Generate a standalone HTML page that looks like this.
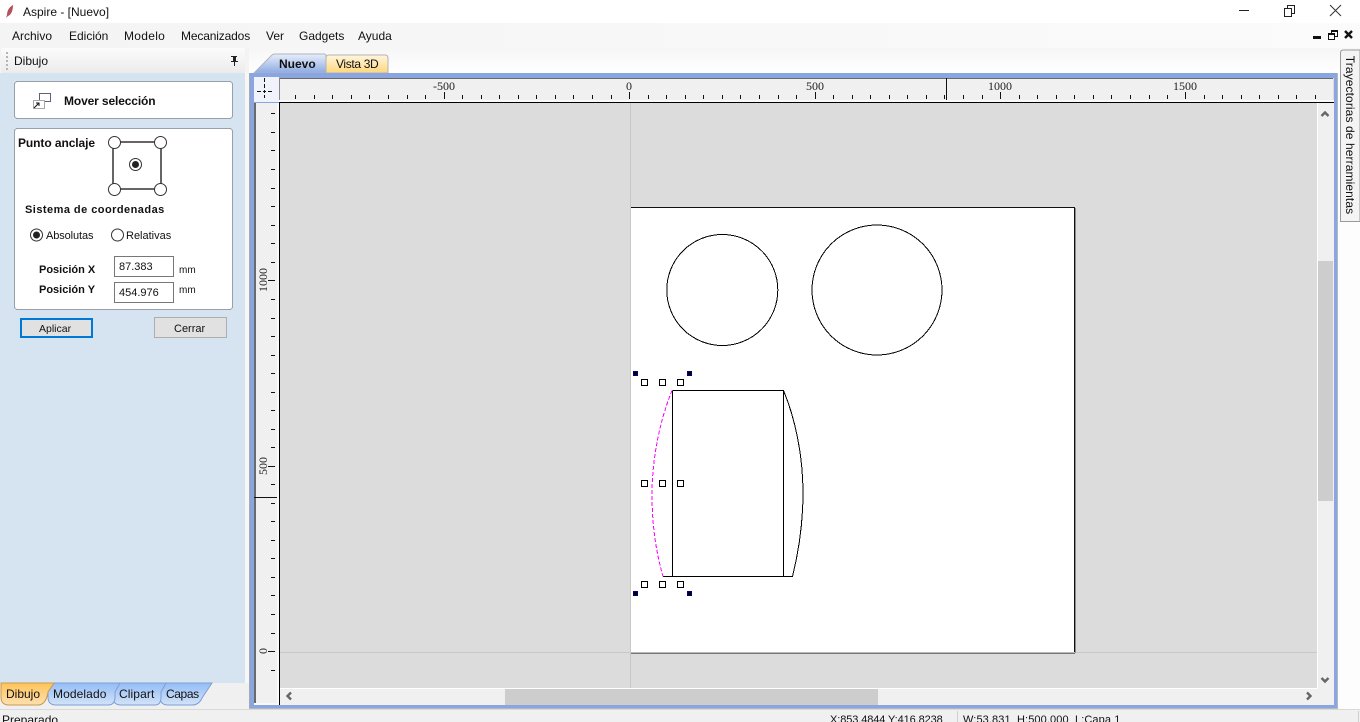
<!DOCTYPE html>
<html lang="es">
<head>
<meta charset="utf-8">
<title>Aspire - [Nuevo]</title>
<style>
html,body{margin:0;padding:0;width:1360px;height:722px;overflow:hidden;background:#fff}
body{position:relative;font:12px "Liberation Sans",sans-serif;color:#111}
.t{position:absolute;white-space:nowrap;line-height:14px}
.b{font-weight:bold}
.s{font-size:11px}
.r{font-family:"Liberation Serif",serif;font-size:12px;color:#222}
svg{position:absolute;left:0;top:0}
</style>
</head>
<body>
<svg width="1360" height="722" viewBox="0 0 1360 722" shape-rendering="crispEdges">
<defs>
<linearGradient id="hdr" x1="0" y1="0" x2="0" y2="1"><stop offset="0" stop-color="#fbfbfb"/><stop offset="1" stop-color="#ececec"/></linearGradient>
<linearGradient id="menu" x1="0" y1="0" x2="1" y2="0"><stop offset="0" stop-color="#f4f4f4"/><stop offset="1" stop-color="#fbfbfb"/></linearGradient>
<linearGradient id="top" x1="0" y1="0" x2="0" y2="1"><stop offset="0" stop-color="#f6f6f6"/><stop offset="1" stop-color="#ffffff"/></linearGradient>
<linearGradient id="blue" x1="0" y1="0" x2="0" y2="1"><stop offset="0" stop-color="#e8eefa"/><stop offset="1" stop-color="#8eaae2"/></linearGradient>
<linearGradient id="yel" x1="0" y1="0" x2="0" y2="1"><stop offset="0" stop-color="#fff6df"/><stop offset="1" stop-color="#ffd67c"/></linearGradient>
<linearGradient id="org" x1="0" y1="0" x2="0" y2="1"><stop offset="0" stop-color="#ffc458"/><stop offset="1" stop-color="#fde0b0"/></linearGradient>
<linearGradient id="blu2" x1="0" y1="0" x2="0" y2="1"><stop offset="0" stop-color="#94bdf5"/><stop offset="1" stop-color="#d3e3f8"/></linearGradient>
</defs>

<!-- base regions -->
<rect x="0" y="0" width="1360" height="23" fill="#fff"/>
<rect x="0" y="23" width="1360" height="25" fill="url(#menu)"/>
<rect x="0" y="48" width="1360" height="26" fill="url(#top)"/>
<rect x="0" y="48" width="249" height="662" fill="#f3f3f3"/>
<rect x="1338" y="74" width="22" height="636" fill="#fdfdfd"/>
<rect x="1" y="48" width="244" height="25" rx="2" fill="url(#hdr)"/>
<rect x="0" y="73" width="245" height="610" fill="#d6e4f2"/>
<rect x="245" y="73" width="4" height="637" fill="#f7f7f7"/>
<rect x="0" y="683" width="249" height="26" fill="#f0f0f0"/>
<rect x="0" y="709" width="1360" height="13" fill="#f0f0f0"/>
<rect x="0" y="709" width="1360" height="1" fill="#d9d9d9"/>
<rect x="957" y="711" width="1" height="11" fill="#cfcfcf"/>
<rect x="1358" y="711" width="1" height="11" fill="#cfcfcf"/>

<!-- grip -->
<g fill="#b5b5b5"><rect x="6" y="52" width="2" height="2"/><rect x="6" y="56" width="2" height="2"/><rect x="6" y="60" width="2" height="2"/><rect x="6" y="64" width="2" height="2"/><rect x="6" y="68" width="2" height="2"/></g>
<!-- pin -->
<path d="M231 56h6v1h-1v4h2v1h-3v4h-1v-4h-3v-1h2v-4h-2z" fill="#222"/>

<!-- app icon -->
<path d="M13 5C9 7 7 11 7 15l-1 3 2-2c3-1 5-5 5-11z" fill="#b5505c" shape-rendering="auto"/>

<!-- window controls -->
<rect x="1239" y="10" width="10" height="1" fill="#222"/>
<path d="M1284.500 8.500h7v8h-7zM1287.500 8.500v-3h7v8h-3" fill="none" stroke="#222"/>
<path d="M1330 5l11 11M1341 5l-11 11" stroke="#333" fill="none" shape-rendering="auto"/>
<!-- mdi controls -->
<rect x="1313" y="36" width="8" height="3" fill="#111"/>
<path d="M1328.500 33.500h6v6h-6zM1331.500 33.500v-3h6v6h-3" fill="none" stroke="#111"/><rect x="1328" y="33" width="7" height="2" fill="#111"/><rect x="1331" y="30" width="7" height="2" fill="#111"/>
<path d="M1345 31l7 7M1352 31l-7 7" stroke="#111" stroke-width="2.4" fill="none" shape-rendering="auto"/>

<!-- document tabs -->
<path d="M254 73L272 55q1-1 3-1h49q2 0 2 2v17z" fill="url(#blue)" stroke="#b0b4c0" shape-rendering="auto"/>
<path d="M326 73V58q0-3 3-3h56q3 0 3 3v15z" fill="url(#yel)" stroke="#b3b3b3" shape-rendering="auto"/>

<!-- main frame -->
<rect x="249" y="73" width="1089" height="636" fill="#8aa6e0"/>
<rect x="249" y="73" width="1" height="636" fill="#a9a9b0"/>
<rect x="249" y="708" width="1089" height="1" fill="#b5b8c2"/>
<rect x="1337" y="73" width="1" height="636" fill="#b5b8c2"/>

<!-- ruler corner -->
<rect x="254" y="77" width="25" height="25" fill="#f0f3fb"/>
<path d="M264.500 78v4M264.500 84v4M264.500 90v3M264.500 95v3M257 91.500h4M263 91.500h3M268 91.500h4" stroke="#111" fill="none"/>

<!-- horizontal ruler -->
<rect x="279" y="78" width="1055" height="25" fill="#f0f0f0"/>
<rect x="279" y="78" width="1055" height="1" fill="#6a6a6a"/>
<rect x="279" y="78" width="1" height="23" fill="#8a8a8a"/>
<rect x="1333" y="78" width="1" height="23" fill="#dcdcdc"/>
<rect x="279" y="100" width="1055" height="2" fill="#fafafa"/>
<rect x="279" y="102" width="1055" height="1" fill="#000"/>
<path stroke="#111" stroke-width="1" fill="none" d="M295.500 95v4M314.500 95v4M332.500 95v4M351.500 95v4M369.500 95v4M388.500 95v4M407.500 95v4M425.500 95v4M462.500 95v4M481.500 95v4M499.500 95v4M518.500 95v4M536.500 95v4M555.500 95v4M573.500 95v4M592.500 95v4M611.500 95v4M648.500 95v4M666.500 95v4M685.500 95v4M703.500 95v4M722.500 95v4M740.500 95v4M759.500 95v4M778.500 95v4M796.500 95v4M833.500 95v4M852.500 95v4M870.500 95v4M889.500 95v4M907.500 95v4M926.500 95v4M944.500 95v4M963.500 95v4M982.500 95v4M1019.500 95v4M1037.500 95v4M1056.500 95v4M1074.500 95v4M1093.500 95v4M1111.500 95v4M1130.500 95v4M1149.500 95v4M1167.500 95v4M1204.500 95v4M1222.500 95v4M1241.500 95v4M1259.500 95v4M1278.500 95v4M1296.500 95v4M1315.500 95v4M444.500 92v7M629.500 92v7M815.500 92v7M1000.500 92v7M1185.500 92v7"/>
<rect x="946" y="78" width="1" height="22" fill="#111"/>

<!-- vertical ruler -->
<rect x="254" y="103" width="25" height="602" fill="#f0f0f0"/>
<rect x="254" y="103" width="2" height="600" fill="#6a6a6a"/>
<rect x="254" y="703" width="25" height="2" fill="#f8f8f8"/>
<rect x="277" y="103" width="2" height="602" fill="#fafafa"/>
<rect x="279" y="103" width="1" height="602" fill="#000"/>
<path stroke="#111" stroke-width="1" fill="none" d="M271 113.500h4M271 132.500h4M271 150.500h4M271 169.500h4M271 188.500h4M271 206.500h4M271 225.500h4M271 243.500h4M271 262.500h4M271 299.500h4M271 318.500h4M271 336.500h4M271 355.500h4M271 373.500h4M271 392.500h4M271 410.500h4M271 429.500h4M271 447.500h4M271 484.500h4M271 503.500h4M271 521.500h4M271 540.500h4M271 558.500h4M271 577.500h4M271 595.500h4M271 614.500h4M271 633.500h4M271 670.500h4M268 280.500h7M268 466.500h7M268 651.500h7"/>
<rect x="254" y="497" width="23" height="1" fill="#111"/>

<!-- canvas -->
<rect x="280" y="103" width="1037" height="585" fill="#dcdcdc"/>
<rect x="1317" y="103" width="1" height="586" fill="#fff"/>
<rect x="280" y="688" width="1038" height="1" fill="#fff"/>
<rect x="631" y="208" width="444" height="444" fill="#fff"/>
<rect x="630" y="103" width="1" height="585" fill="#c8c8c8"/>
<rect x="280" y="652" width="350" height="1" fill="#c8c8c8"/>
<rect x="1076" y="652" width="241" height="1" fill="#c8c8c8"/>
<rect x="631" y="207" width="444" height="1" fill="#111"/>
<rect x="1074" y="207" width="1" height="446" fill="#111"/>
<rect x="1075" y="208" width="1" height="445" fill="#8c8c8c"/>
<rect x="631" y="652" width="444" height="1" fill="#b8b8b8"/>
<rect x="631" y="653" width="444" height="1" fill="#777"/>

<!-- drawing -->
<g fill="none" stroke="#000" stroke-width="1">
<circle cx="722.300" cy="290" r="55.500"/>
<circle cx="877" cy="290" r="65"/>
<path d="M672.500 390.500H783.500V576.500H663M672.500 390.500V576.500M783.500 390.500C795 418 803 455 803 493C803 520 800 546 792.500 576.500H783"/>
<path d="M672 390.500C660 420 652 458 652 495C652 525 656 552 663 576.500" stroke="#ff00ff" stroke-dasharray="4 2"/>
</g>
<g fill="#fff" stroke="#000" stroke-width="1">
<rect x="641.500" y="379.500" width="6" height="6"/><rect x="659.500" y="379.500" width="6" height="6"/><rect x="677.500" y="379.500" width="6" height="6"/>
<rect x="641.500" y="480.500" width="6" height="6"/><rect x="659.500" y="480.500" width="6" height="6"/><rect x="677.500" y="480.500" width="6" height="6"/>
<rect x="641.500" y="581.500" width="6" height="6"/><rect x="659.500" y="581.500" width="6" height="6"/><rect x="677.500" y="581.500" width="6" height="6"/>
</g>
<g fill="#000" stroke="#000080" stroke-width="1">
<rect x="633.500" y="371.500" width="4" height="4"/><rect x="687.500" y="371.500" width="4" height="4"/>
<rect x="633.500" y="591.500" width="4" height="4"/><rect x="687.500" y="591.500" width="4" height="4"/>
</g>

<!-- scrollbars -->
<rect x="1318" y="103" width="16" height="602" fill="#f0f0f0"/>
<rect x="280" y="689" width="1054" height="16" fill="#f0f0f0"/>
<rect x="1318" y="261" width="15" height="240" fill="#cdcdcd"/>
<rect x="505" y="689" width="373" height="16" fill="#cdcdcd"/>
<g fill="none" stroke="#666" stroke-width="2.400" shape-rendering="auto">
<path d="M1321.500 116l3.500-3.500 3.500 3.500"/>
<path d="M1321.500 678l3.500 3.500 3.500-3.500"/>
<path d="M291 692.500l-3.500 3.500 3.500 3.500"/>
<path d="M1307 692.500l3.500 3.500-3.500 3.500"/>
</g>

<!-- side tab -->
<path d="M1340.500 221.500V53q0-3 3-3H1360V221.500z" fill="#f4f4f4" stroke="#9a9a9a" shape-rendering="auto"/>

<!-- left panel boxes -->
<rect x="14.500" y="81.500" width="218" height="37" rx="3" fill="#fff" stroke="#9aa0a8"/>
<rect x="14.500" y="128.500" width="218" height="181" rx="3" fill="#fff" stroke="#9aa0a8"/>
<!-- move icon -->
<rect x="39.500" y="93.500" width="11" height="8" fill="#fff" stroke="#5a6478"/>
<rect x="33.500" y="100.500" width="11" height="8" fill="#fff" stroke="#a8a8a8"/>
<path d="M34 108l5-5M36 103h3v3" stroke="#111" fill="none" shape-rendering="auto"/>

<!-- anchor -->
<g shape-rendering="auto">
<rect x="113" y="142" width="48" height="47" fill="none" stroke="#666" stroke-width="2"/>
<g fill="#fff" stroke="#333" stroke-width="1">
<circle cx="114.500" cy="142.500" r="6"/><circle cx="160.500" cy="142.500" r="6"/>
<circle cx="114.500" cy="189.500" r="6"/><circle cx="160.500" cy="189.500" r="6"/>
<circle cx="135.500" cy="164.500" r="6"/>
<circle cx="36.500" cy="235" r="6"/><circle cx="117.500" cy="235" r="6"/>
</g>
<circle cx="135.500" cy="164.500" r="3.500" fill="#222"/>
<circle cx="36.500" cy="235" r="3.500" fill="#222"/>
</g>

<!-- inputs and buttons -->
<rect x="114.500" y="256.500" width="59" height="20" fill="#fff" stroke="#777"/>
<rect x="114.500" y="282.500" width="59" height="20" fill="#fff" stroke="#777"/>
<rect x="21" y="319" width="71" height="18" fill="#e1e1e1" stroke="#0078d7" stroke-width="2"/>
<rect x="154.500" y="317.500" width="72" height="20" fill="#e1e1e1" stroke="#adadad"/>

<!-- bottom tabs -->
<g shape-rendering="auto" stroke="#7d9fd6">
<path d="M160 683H212L202 698Q199 705 192 705H168Q160 705 160 697V692z" fill="url(#blu2)"/>
<path d="M114 683H166L161 692V697Q161 705 155 705H121Q113 705 113 697V692z" fill="url(#blu2)"/>
<path d="M48 692L54 683H120L115 692V697Q115 705 108 705H56Q48 705 48 697z" fill="url(#blu2)"/>
<path d="M1 683H54L48 692Q46 705 38 705H9Q1 705 1 697z" fill="url(#org)" stroke="#c99a50"/>
</g>
</svg>

<!-- title and menu -->
<div class="t" style="left:23px;top:5px">Aspire - [Nuevo]</div>
<div class="t" style="left:12px;top:29px">Archivo</div>
<div class="t" style="left:69px;top:29px">Edición</div>
<div class="t" style="left:124px;top:29px;letter-spacing:.3px">Modelo</div>
<div class="t" style="left:181px;top:29px;letter-spacing:-.15px">Mecanizados</div>
<div class="t" style="left:266px;top:29px">Ver</div>
<div class="t" style="left:299px;top:29px">Gadgets</div>
<div class="t" style="left:358px;top:29px">Ayuda</div>

<!-- panel -->
<div class="t" style="left:14px;top:54px">Dibujo</div>
<div class="t b" style="left:64px;top:94px;letter-spacing:-.13px">Mover selección</div>
<div class="t b" style="left:18px;top:136px;letter-spacing:-.08px">Punto anclaje</div>
<div class="t b s" style="left:25px;top:203px;letter-spacing:.46px">Sistema de coordenadas</div>
<div class="t s" style="left:46px;top:229px;letter-spacing:-.1px">Absolutas</div>
<div class="t s" style="left:126px;top:229px">Relativas</div>
<div class="t b s" style="left:39px;top:263px">Posición X</div>
<div class="t b s" style="left:39px;top:283px">Posición Y</div>
<div class="t s" style="left:119px;top:260px">87.383</div>
<div class="t s" style="left:119px;top:286px">454.976</div>
<div class="t s" style="left:179px;top:264px;font-size:10px">mm</div>
<div class="t s" style="left:179px;top:284px;font-size:10px">mm</div>
<div class="t s" style="left:39px;top:322px;font-size:10.500px">Aplicar</div>
<div class="t s" style="left:174px;top:322px">Cerrar</div>

<!-- bottom tabs text -->
<div class="t" style="left:6px;top:687px">Dibujo</div>
<div class="t" style="left:53px;top:687px;letter-spacing:.1px">Modelado</div>
<div class="t" style="left:119px;top:687px;letter-spacing:.1px">Clipart</div>
<div class="t" style="left:166px;top:687px;letter-spacing:-.4px">Capas</div>

<!-- doc tabs text -->
<div class="t b" style="left:279px;top:57px">Nuevo</div>
<div class="t" style="left:336px;top:57px;letter-spacing:-.35px">Vista 3D</div>

<!-- ruler labels -->
<div class="t r" style="left:433px;top:79px">-500</div>
<div class="t r" style="left:626px;top:79px">0</div>
<div class="t r" style="left:806px;top:79px">500</div>
<div class="t r" style="left:988px;top:79px">1000</div>
<div class="t r" style="left:1173px;top:79px">1500</div>
<div class="t r" style="left:263px;top:280px;transform:translate(-50%,-50%) rotate(-90deg)">1000</div>
<div class="t r" style="left:263px;top:466px;transform:translate(-50%,-50%) rotate(-90deg)">500</div>
<div class="t r" style="left:263px;top:651px;transform:translate(-50%,-50%) rotate(-90deg)">0</div>

<!-- side tab text -->
<div class="t" style="left:1350px;top:135px;transform:translate(-50%,-50%) rotate(90deg);letter-spacing:.1px">Trayectorias de herramientas</div>

<!-- status bar -->
<div class="t" style="left:2px;top:713px">Preparado</div>
<div class="t s" style="left:830px;top:713px;letter-spacing:-.1px">X:853.4844 Y:416.8238</div>
<div class="t s" style="left:963px;top:713px;letter-spacing:.1px">W:53.831 &nbsp;H:500.000 &nbsp;L:Capa 1</div>
</body>
</html>
